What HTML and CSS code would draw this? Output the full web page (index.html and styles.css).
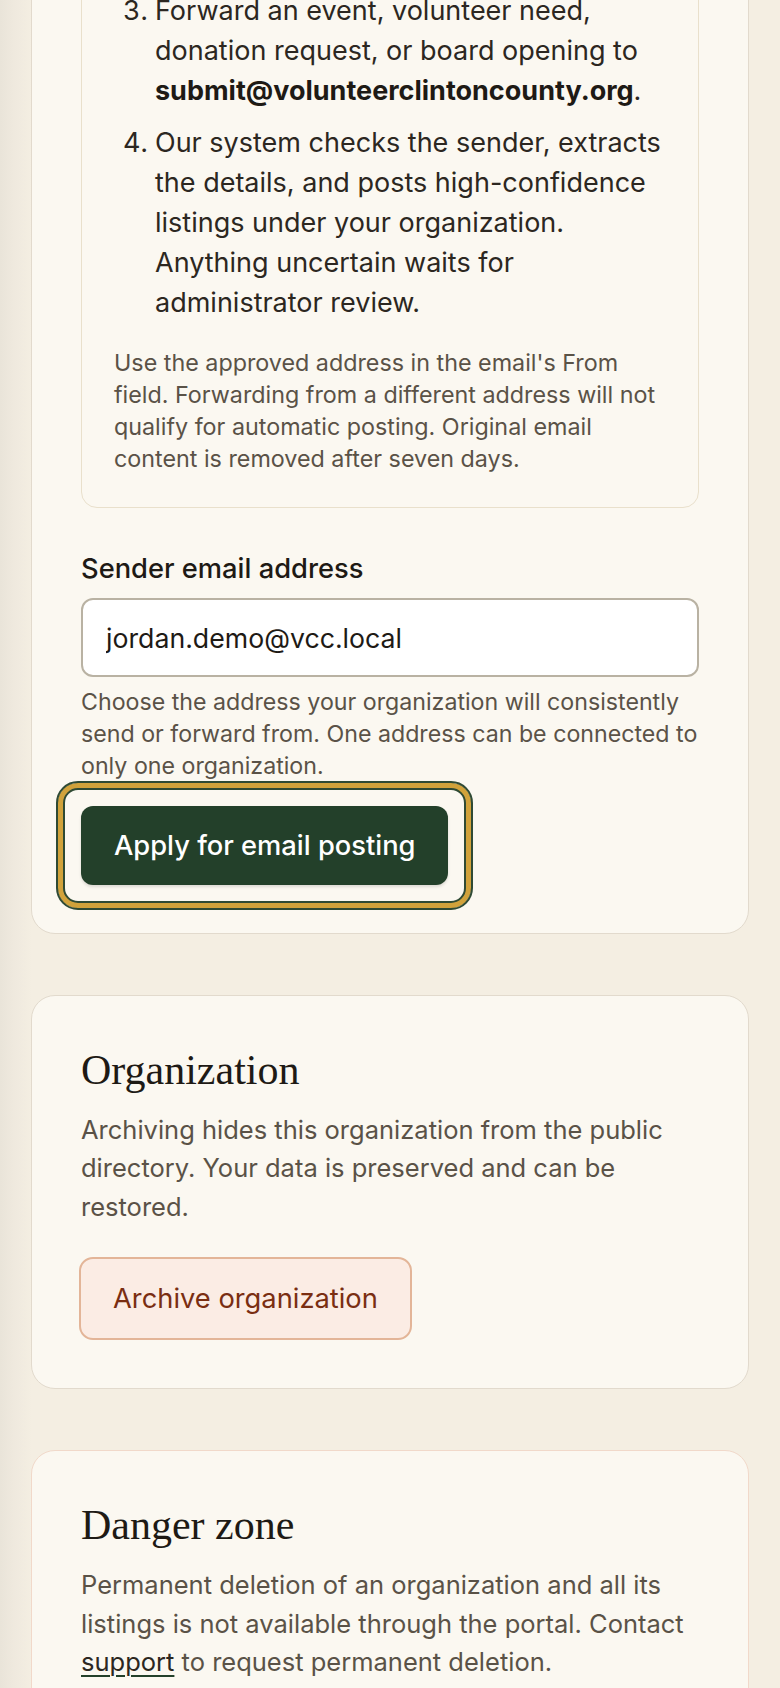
FILE: index.html
```html
<!DOCTYPE html>
<html lang="en">
<head>
<meta charset="utf-8">
<title>Organization settings</title>
<link rel="stylesheet" href="styles.css">
</head>
<body>
<main class="page">
  <section class="card card-email">
    <div class="steps-box">
      <ol class="steps" start="3">
        <li>Forward an event, volunteer need, donation request, or board opening to <strong>submit@volunteerclintoncounty.org</strong>.</li>
        <li>Our system checks the sender, extracts the details, and posts high-confidence listings under your organization. Anything uncertain waits for administrator review.</li>
      </ol>
      <p class="note">Use the approved address in the email's From field. Forwarding from a different address will not qualify for automatic posting. Original email content is removed after seven days.</p>
    </div>
    <label class="field-label" for="sender">Sender email address</label>
    <input class="field-input" id="sender" type="email" value="jordan.demo@vcc.local">
    <p class="help">Choose the address your organization will consistently send or forward from. One address can be connected to only one organization.</p>
    <div class="focus-ring">
      <button class="btn-primary" type="button">Apply for email posting</button>
    </div>
  </section>

  <section class="card">
    <h2 class="card-title">Organization</h2>
    <p class="card-text">Archiving hides this organization from the public directory. Your data is preserved and can be restored.</p>
    <button class="btn-archive" type="button">Archive organization</button>
  </section>

  <section class="card card-danger">
    <h2 class="card-title">Danger zone</h2>
    <p class="card-text">Permanent deletion of an organization and all its listings is not available through the portal. Contact <a class="link" href="#">support</a> to request permanent deletion.</p>
  </section>
</main>
</body>
</html>
```

FILE: styles.css
```css
* { box-sizing: border-box; }

html, body {
  margin: 0;
  padding: 0;
}

body {
  background: linear-gradient(to right, #e9e4d9 0, #efe9de 14px, #f4eee2 32px, #f4eee2 100%);
  font-family: "Inter", "Noto Sans", sans-serif;
  color: #2c2721;
  overflow: hidden;
}

.page {
  padding: 0 31px;
  display: flex;
  flex-direction: column;
  gap: 61px;
}

.card {
  display: flex;
  flex-direction: column;
  align-items: flex-start;
  background: #fbf8f1;
  border: 1px solid #e2dacd;
  border-radius: 24px;
  padding: 48px 49px;
}

.card-email {
  margin-top: -91px;
}

.card-danger {
  border-color: #f1d9ca;
}

.steps-box {
  align-self: stretch;
  border: 1px solid #e9e0cc;
  border-radius: 16px;
  padding: 32px;
}

.steps {
  margin: 0 0 24px;
  padding-left: 41px;
  font-size: 27px;
  line-height: 40px;
  color: #2c2721;
}

.steps li + li {
  margin-top: 12px;
}

.steps strong {
  font-weight: 700;
  color: #1e1a15;
}

.note {
  margin: 0 -6px 0 0;
  font-size: 23.3px;
  line-height: 32px;
  color: #5a5247;
}

.field-label {
  display: block;
  margin-top: 43px;
  font-size: 27.3px;
  line-height: 36px;
  font-weight: 500;
  color: #1e1a15;
}

.field-input {
  align-self: stretch;
  display: block;
  width: 100%;
  margin-top: 11px;
  height: 79px;
  padding: 0 23px;
  border: 2px solid #b9b2a3;
  border-radius: 12px;
  background: #ffffff;
  font-family: inherit;
  font-size: 26.7px;
  color: #1e1a15;
}

.help {
  align-self: stretch;
  margin: 9px -18px 0 0;
  font-size: 23.2px;
  line-height: 32px;
  color: #5a5247;
}

.focus-ring {
  display: inline-flex;
  margin: -1px 0 -25px -25px;
  padding: 23px;
  border: 2px solid #2f4a34;
  border-radius: 22px;
  box-shadow: inset 0 0 0 5px #d1a23b, inset 0 0 0 7px #2f4a34;
}

.btn-primary {
  height: 79px;
  padding: 0 33px;
  border: 0;
  border-radius: 12px;
  background: #23402a;
  color: #ffffff;
  font-family: inherit;
  font-size: 27.3px;
  font-weight: 500;
  white-space: nowrap;
  box-shadow: 0 2px 3px rgba(0, 0, 0, 0.12);
}

.card-title {
  margin: 3px 0 0;
  font-family: "Liberation Serif", "Times New Roman", serif;
  font-weight: 400;
  font-size: 42px;
  line-height: 46px;
  color: #1e1a15;
}

.card-text {
  align-self: stretch;
  margin: 18px -4px 0 0;
  font-size: 25.5px;
  line-height: 38.4px;
  color: #5a5247;
}

.btn-archive {
  margin-top: 31px;
  margin-left: -2px;
  height: 83px;
  padding: 0 32px;
  border: 2px solid #e3b598;
  border-radius: 14px;
  background: #fbece4;
  color: #7a2e12;
  font-family: inherit;
  font-size: 27.3px;
  font-weight: 400;
  white-space: nowrap;
}

.link {
  color: #2c2721;
  text-decoration: underline;
  text-decoration-color: #23402a;
  text-decoration-thickness: 2px;
  text-underline-offset: 4px;
}
```
